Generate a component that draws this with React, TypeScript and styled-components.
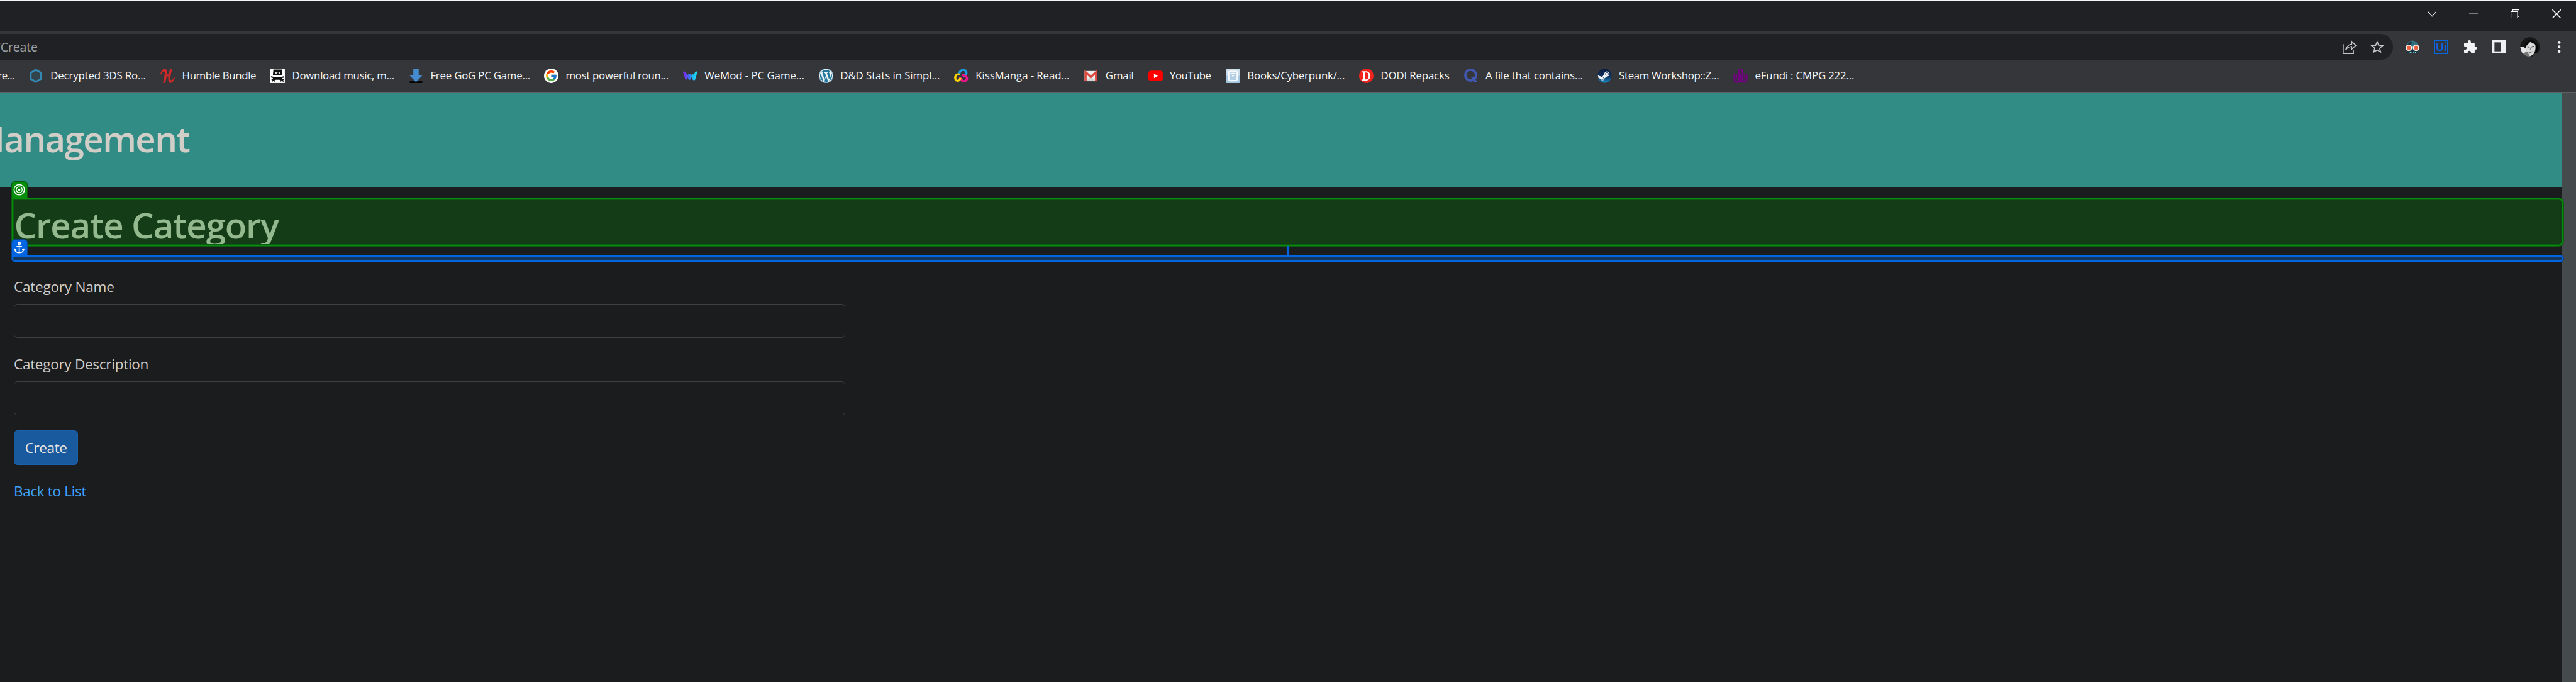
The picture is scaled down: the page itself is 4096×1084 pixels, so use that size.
import React, { useLayoutEffect, useRef, useState } from 'react';
import styled, { createGlobalStyle } from 'styled-components';
import { FcGoogle } from 'react-icons/fc';
import { FaWordpress, FaSteam } from 'react-icons/fa';
import { SiHumblebundle } from 'react-icons/si';
import { MdExtension, MdStarBorder } from 'react-icons/md';

const SCALE = 4096 / 4285;
const u = (n: number) => `${+(n * SCALE).toFixed(3)}px`;

const Global = createGlobalStyle`
  * { box-sizing: border-box; }
  html, body, #root { margin: 0; padding: 0; height: 100%; }
  body { background: #1b1c1e; overflow: hidden; font-family: "Open Sans", "Noto Sans", sans-serif; }
  svg { display: block; }
`;

/* Keeps a label at a fixed measure by spreading the difference over its letters. */
const FitLabel = styled.span<{ $spacing: number }>`
  display: inline-block;
  flex: none;
  white-space: pre;
  letter-spacing: ${(p) => p.$spacing}px;
`;

function Fit({ text, width }: { text: string; width: number }) {
  const ref = useRef<HTMLSpanElement>(null);
  const [spacing, setSpacing] = useState(0);
  useLayoutEffect(() => {
    if (!ref.current) return;
    const natural = ref.current.getBoundingClientRect().width;
    setSpacing((width * SCALE - natural) / text.length);
  }, [text, width]);
  return (
    <FitLabel ref={ref} $spacing={spacing}>
      {text}
    </FitLabel>
  );
}

const Window = styled.div`
  width: 4096px;
  height: 1084px;
  display: flex;
  flex-direction: column;
  overflow: hidden;
  background: #1b1c1e;
`;

const TabStrip = styled.header`
  flex: none;
  height: ${u(51)};
  display: flex;
  justify-content: flex-end;
  align-items: center;
  gap: ${u(54)};
  padding: 0 ${u(25)} ${u(6)} 0;
  border-top: 1px solid #f4f6f5;
  background: #202124;
  box-shadow: inset 0 1px 0 #7d8583;
`;

const Toolbar = styled.div`
  flex: none;
  height: ${u(48)};
  padding-top: ${u(6)};
  display: flex;
  background: #35363a;
`;

const Omnibox = styled.div`
  width: ${u(3981)};
  height: ${u(42)};
  display: flex;
  align-items: center;
  justify-content: space-between;
  border-radius: 0 ${u(21)} ${u(21)} 0;
  background: #202124;
  overflow: hidden;
`;

const Address = styled.div`
  width: ${u(62.5)};
  padding-top: ${u(1.5)};
  display: flex;
  justify-content: flex-end;
  font-size: ${u(20.5)};
  line-height: ${u(30)};
  color: #9aa0a6;
`;

const OmniActions = styled.div`
  display: flex;
  align-items: center;
  gap: ${u(21)};
  padding-right: ${u(13)};
  color: #c3c5c8;
`;

const Extensions = styled.div`
  flex: 1;
  display: flex;
  align-items: center;
  gap: ${u(24)};
  padding-left: ${u(21)};
  color: #f1f3f4;
`;

const UiBadge = styled.div`
  width: ${u(24)};
  height: ${u(24)};
  border: ${u(2.2)} solid #0466e0;
  display: flex;
  align-items: center;
  justify-content: center;
  font: 600 ${u(18)}/1 "Inter", sans-serif;
  color: #0466e0;
`;

const Bookmarks = styled.nav`
  flex: none;
  height: ${u(56)};
  display: flex;
  align-items: center;
  padding-bottom: ${u(0.6)};
  background: #35363a;
  border-bottom: 2px solid #5f6063;
  font-size: ${u(17.6)};
  line-height: ${u(24)};
  color: #f8f9fa;
  overflow: hidden;
`;

const Bookmark = styled.div<{ $width: number }>`
  flex: none;
  width: ${(p) => u(p.$width)};
  display: flex;
  align-items: center;
  gap: ${u(12)};
  ${FitLabel} { padding-top: ${u(1.2)}; }
`;

const Favicon = styled.span`
  flex: none;
  width: ${u(24)};
  height: ${u(24)};
  > svg { width: 100%; height: 100%; }
`;

const CutBookmark = styled.div`
  flex: none;
  width: ${u(48)};
  padding: ${u(1.2)} ${u(24.5)} 0 0;
  display: flex;
  justify-content: flex-end;
`;

const Viewport = styled.main`
  flex: 1;
  min-height: 0;
  display: flex;
  position: relative;
`;

const Page = styled.div`
  width: ${u(4262)};
  color: #d1cdc7;
`;

const Scrollbar = styled.div`
  flex: 1;
  background: #454a4d;
`;

const Banner = styled.div`
  height: ${u(156)};
  display: flex;
  align-items: center;
  background: #308c85;
  overflow: hidden;
`;

const BannerTitle = styled.div`
  width: ${u(315)};
  display: flex;
  justify-content: flex-end;
  font-size: ${u(59)};
  font-weight: 600;
  line-height: ${u(72)};
  padding-bottom: ${u(3)};
`;

const Content = styled.section`
  padding: ${u(28.5)} 0 0 ${u(23)};
  font-size: ${u(23.6)};
  line-height: ${u(36)};
`;

const Title = styled.h1`
  margin: 0;
  height: ${u(131.5)};
  padding-left: ${u(0.6)};
  font-size: ${u(59)};
  font-weight: 600;
  line-height: ${u(72)};
`;

const Field = styled.label`
  display: block;
  height: ${u(129)};
  margin-top: -${u(12)};
  & + & { margin-top: 0; }
`;

const Input = styled.input`
  display: block;
  width: ${u(1383)};
  height: ${u(57)};
  margin: ${u(10)} 0 0;
  border: 1px solid #3e4143;
  border-radius: ${u(6)};
  background: transparent;
  outline: 0;
`;

const CreateButton = styled.button`
  display: flex;
  align-items: center;
  justify-content: center;
  width: ${u(107)};
  height: ${u(57)};
  margin: -${u(1)} 0 ${u(26)};
  padding: ${u(1)} 0 0;
  border: 1px solid #1a62ab;
  border-radius: ${u(6)};
  background: #19599d;
  color: #e8e6e3;
  font: inherit;
`;

const BackLink = styled.a`
  display: block;
  color: #3fa2f7;
  text-decoration: none;
`;

/* Inspector overlays */
const GREEN = '#058d0c';
const GREEN_EDGE = '#0d5b12';
const BLUE = '#0266e2';
const BLUE_EDGE = '#0b4590';

const Highlight = styled.div<{ $top: number; $height: number; $line: string; $edge: string; $fill: string; $radius: string }>`
  position: absolute;
  left: ${u(18.6)};
  top: ${(p) => u(p.$top)};
  width: ${u(4247)};
  height: ${(p) => u(p.$height)};
  border: 1px solid ${(p) => p.$edge};
  border-radius: ${(p) => p.$radius};
  background: ${(p) => p.$fill};
  box-shadow: inset 0 0 0 2px ${(p) => p.$line}, inset 0 0 0 3px ${(p) => p.$edge};
`;

const Tag = styled.div<{ $top: number; $color: string; $edge: string }>`
  position: absolute;
  left: ${u(18.6)};
  top: ${(p) => u(p.$top)};
  width: ${u(27.2)};
  height: ${u(27.5)};
  display: flex;
  align-items: center;
  justify-content: center;
  border: 1px solid ${(p) => p.$edge};
  border-bottom: 0;
  border-radius: ${u(6)} ${u(6)} 0 0;
  background: ${(p) => p.$color};
`;

const Connector = styled.div`
  position: absolute;
  left: ${u(2140)};
  top: ${u(254.5)};
  width: 4px;
  height: ${u(15)};
  border: 1px solid ${BLUE_EDGE};
  border-width: 0 1px;
  background: ${BLUE};
`;

const px = (n: number) => n * SCALE;

const Icon = ({ size = 24, children }: { size?: number; children: React.ReactNode }) => (
  <svg width={px(size)} height={px(size)} viewBox="0 0 24 24" fill="none">
    {children}
  </svg>
);

const Hexagon = () => (
  <Icon>
    <path d="M11.5 2 20 6.8v10.4L11.5 22 3 17.2V6.800z" stroke="#3389b3" strokeWidth="3" fill="#34424a" />
    <path d="M9.500 9h4l-4 6h4" stroke="#275064" strokeWidth="1" />
  </Icon>
);
const Humble = () => (
  <Icon>
    <SiHumblebundle size={24} color="#cc2929" />
  </Icon>
);
const Truck = () => (
  <Icon>
    <path d="M0 0h24v24H0z" fill="#fff" />
    <path d="M5 1.500h14l1 10H4z" fill="#111" />
    <path d="M7.500 5.500h3v3h-3zM13.500 5.500h3v3h-3zM11 5.500h2v1h-2z" fill="#ddd" />
    <path d="M1 13.500c3 2 19 2 22 0M6 17h12M2 21l7-3.500h6l7 3.500M5 14v4M19 14v4M2 18l6 3M22 18l-6 3" stroke="#111" strokeWidth="2" />
  </Icon>
);
const Download = () => (
  <Icon>
    <path d="M1.500 21h21v3h-21z" fill="#050505" />
    <path d="M7.500 0h9v11.500h6L12 22.500 1.500 11.500h6z" fill="#458bd0" />
  </Icon>
);
const Google = () => (
  <Icon>
    <circle cx="12" cy="12" r="12" fill="#fff" />
    <g transform="translate(1.500 1.500)"><FcGoogle size={21} /></g>
  </Icon>
);
const WeMod = () => (
  <Icon>
    <defs>
      <linearGradient id="wemod" x1="0" x2="1">
        <stop offset="0" stopColor="#8a1ff5" />
        <stop offset=".42" stopColor="#3d6cf0" />
        <stop offset=".7" stopColor="#20bcf5" />
        <stop offset="1" stopColor="#12e8f6" />
      </linearGradient>
    </defs>
    <path d="M0 5.500c2-1.500 4-.5 5 1.500l2.500 4c.5-3 3.500-3.500 5-1l1 2c0-3 3-4 4.500-1.500L20 6c1-1.500 3-1.500 4-.5l-3.500 12c-.8 2.500-3.500 2.500-4.700.3l-2-3.500-1 3c-.7 2-3 2-4 0L7.500 15l-.7 2.500c-1 1.500-3 1-3.600-1z" fill="url(#wemod)" />
  </Icon>
);
const WordPress = () => (
  <Icon>
    <circle cx="12" cy="12" r="12" fill="#e9f2f6" />
    <FaWordpress size={24} color="#21759b" />
  </Icon>
);
const Kiss = () => (
  <Icon>
    <g strokeWidth="3.600">
      <path d="M3.500 20.500C-.5 13 4 8 9.500 9.800" stroke="#ffd400" />
      <path d="M9 8C10 1 19 0 20.500 6.500c.5 3-2 5-5 5.500" stroke="#1d9be0" />
      <path d="M13 11c8 0 11 6 6.500 9-4 2.500-8 0-9.500-6" stroke="#f0148c" />
      <path d="M4 20.500c3 .5 6-1.500 6.500-5" stroke="#ffd400" />
    </g>
  </Icon>
);
const Gmail = () => (
  <Icon>
    <path d="M1.500 4h21v17h-21z" fill="#ececec" />
    <path d="M4 21 12 13l8 8z" fill="#d3d3d3" />
    <path d="M3.300 21V6l8.700 8 8.700-8v15" stroke="#dc4a3d" strokeWidth="3.600" />
  </Icon>
);
const YouTube = () => (
  <Icon>
    <rect y="3.500" width="24" height="17.500" rx="4.500" fill="#f00" />
    <path d="m9.300 8.500 6.500 3.700-6.500 3.700z" fill="#fff" />
  </Icon>
);
const Books = () => (
  <Icon>
    <rect width="24" height="24" rx="2" fill="#a5c7e1" />
    <path d="M0 2q0-2 2-2h20q2 0 2 2v10H0z" fill="#cbddeb" />
    <rect x="5" y="4.500" width="14" height="15.500" rx="2" stroke="#f3f8fc" strokeWidth="2.400" fill="#b3cde2" />
    <path d="M8 8h8" stroke="#fff" strokeWidth="1.800" />
    <path d="m9.500 11 5 0-2.500 3z" fill="#fff" />
  </Icon>
);
const Dodi = () => (
  <Icon>
    <circle cx="12" cy="12" r="12" fill="#f0241c" />
    <path d="M5 5.500h8M5 19h8M8 5.500V19M11.500 5.500c8-.5 8 13.500 0 13.500" stroke="#fff" strokeWidth="2" />
    <path d="M9 5.500V19M16.300 8c1.300 2 1.300 6.500 0 8.500" stroke="#fff" strokeWidth="2.600" />
  </Icon>
);
const Quiz = () => (
  <Icon>
    <circle cx="12" cy="11" r="9" stroke="#4257b2" strokeWidth="4" />
    <path d="M12 13.500h4.500l7.500 9.500h-6z" fill="#4257b2" />
  </Icon>
);
const Steam = () => (
  <Icon>
    <defs>
      <linearGradient id="steam" x1="0" x2="0" y1="0" y2="1">
        <stop offset="0" stopColor="#0b1b3d" />
        <stop offset=".55" stopColor="#0c2f5d" />
        <stop offset="1" stopColor="#1a8fc6" />
      </linearGradient>
    </defs>
    <circle cx="12" cy="12" r="11" fill="#f4f6f8" />
    <FaSteam size={24} fill="url(#steam)" />
  </Icon>
);
const EFundi = () => (
  <Icon>
    <g stroke="#730080" strokeWidth="3">
      <path d="M2 9v8c0 7 7 7 7 1V7c0-7 6.500-7 6.500 0v11c0 6 6.500 6 6.500-1V9" />
      <path d="M5.500 8v9M19 8v9M12 8v9c0 2-1 5-3 6M12 17c0 2 1 5 3 6" strokeWidth="2" />
    </g>
  </Icon>
);

interface BookmarkData { label: string; icon: React.ReactNode; width: number; text: number }
const bookmarks: BookmarkData[] = [
  { label: 'Decrypted 3DS Ro...', icon: <Hexagon />, width: 219, text: 158.5 },
  { label: 'Humble Bundle', icon: <Humble />, width: 183, text: 123 },
  { label: 'Download music, m...', icon: <Truck />, width: 230, text: 170 },
  { label: 'Free GoG PC Game...', icon: <Download />, width: 225, text: 166 },
  { label: 'most powerful roun...', icon: <Google />, width: 231, text: 171 },
  { label: 'WeMod - PC Game...', icon: <WeMod />, width: 226, text: 166 },
  { label: 'D&D Stats in Simpl...', icon: <WordPress />, width: 225, text: 165.5 },
  { label: 'KissManga - Read...', icon: <Kiss />, width: 216, text: 156 },
  { label: 'Gmail', icon: <Gmail />, width: 107, text: 47 },
  { label: 'YouTube', icon: <YouTube />, width: 129, text: 68.5 },
  { label: 'Books/Cyberpunk/...', icon: <Books />, width: 222, text: 162 },
  { label: 'DODI Repacks', icon: <Dodi />, width: 174, text: 114 },
  { label: 'A file that contains...', icon: <Quiz />, width: 222, text: 162 },
  { label: 'Steam Workshop::Z...', icon: <Steam />, width: 226.5, text: 166.5 },
  { label: 'eFundi : CMPG 222...', icon: <EFundi />, width: 226, text: 165 },
];

const Glyph = ({ w, h, children, line = '#fff' }: { w: number; h: number; children: React.ReactNode; line?: string }) => (
  <svg width={px(w)} height={px(h)} viewBox={`0 0 ${w} ${h}`} fill="none" stroke={line} strokeWidth="1.200">
    {children}
  </svg>
);

const Share = () => (
  <Glyph w={23} h={23} line="#c3c5c8">
    <path d="M.9 6.500v15.600h17v-5M5 16.500C6.500 10 10 7 15 6.500V2l7 6.500-7 6.500v-4.500c-4.500 0-7.500 2-10 6z" strokeWidth="1.700" />
  </Glyph>
);

const Robot = () => (
  <Glyph w={23} h={23} line="none">
    <path d="M2 22V11C2 4 6.500.5 11.500.5S21 4 21 11v11z" fill="#33707f" />
    <path d="M2 13C3 6 6 2 11 3l-2 5h-4z" fill="#17333f" />
    <path d="M2 15h19v7H2z" fill="#173743" />
    <path d="M7 19h1.500v3H7zM10 19h1.500v3H10zM12.800 19h1.500v3h-1.500zM15.500 19H17v3h-1.500z" fill="#9ad1dd" />
    <circle cx="5.500" cy="12.500" r="4.500" fill="#ea6240" stroke="#fff" strokeWidth="1.800" />
    <circle cx="17.500" cy="12.500" r="4.500" fill="#ea6240" stroke="#fff" strokeWidth="1.800" />
    <path d="M9 11.500q2.500-1.500 5 0" stroke="#fff" strokeWidth="1.500" />
  </Glyph>
);

const SidePanel = () => (
  <Glyph w={22} h={22} line="none">
    <path d="M0 0h22v22H0z" fill="#eef0f2" />
    <path d="M3.500 3.500h10.500v15H3.500z" fill="#35363a" />
  </Glyph>
);

const Avatar = () => (
  <Glyph w={33} h={33} line="none">
    <defs><clipPath id="face"><circle cx="16.500" cy="16.500" r="16.300" /></clipPath></defs>
    <g clipPath="url(#face)">
      <path d="M0 0h33v33H0z" fill="#161616" />
      <path d="M10 12c2-5 12-6 15 0 2 6 0 13-3 17l-5 3-5-3c-3-5-4-12-2-17z" fill="#d9d9d9" />
      <path d="M11 14 17 8l8 4V7L16 4 8 11v8z" fill="#0b0b0b" />
      <path d="M0 17l6-1 4 4-1 9-5-1z" fill="#e6e6e6" />
      <path d="M5 27l7-3 5 9H7z" fill="#777" />
      <path d="M12 16l4 .8M19 16.500l4-1" stroke="#222" strokeWidth="1.500" />
      <path d="M14 24.500q4 2 7-.5" stroke="#555" strokeWidth="1.200" />
      <path d="M17.500 17.500 17 21.500h2.500" stroke="#777" strokeWidth="1" />
      <path d="M25 10c5 2 6 8 3 14l-3 3c2-6 2-12 0-17z" fill="#050505" />
      <path d="M22 29l7-3v7h-9z" fill="#3b3b3b" />
    </g>
  </Glyph>
);

export default function App() {
  return (
    <Window>
      <Global />
      <TabStrip>
        <Glyph w={15} h={15}><path d="M.5 3.500l7 8 7-8" /></Glyph>
        <Glyph w={15} h={15}><path d="M0 7.500h15" /></Glyph>
        <Glyph w={15} h={15}><path d="M.6 3.500h11v11h-11zM3.500 3.500V.6h11v11h-3" /></Glyph>
        <Glyph w={15} h={15}><path d="M.3.3l14.400 14.400M14.700.3.3 14.700" strokeWidth="1.500" /></Glyph>
      </TabStrip>
      <Toolbar>
        <Omnibox>
          <Address><Fit text="/Create" width={69} /></Address>
          <OmniActions>
            <Share />
            <MdStarBorder size={px(27)} />
          </OmniActions>
        </Omnibox>
        <Extensions>
          <Robot />
          <UiBadge>Ui</UiBadge>
          <MdExtension size={px(25)} />
          <SidePanel />
          <Avatar />
          <Glyph w={15} h={20} line="none">
            <g fill="#eef0f2"><circle cx="7.500" cy="2.500" r="2.400" /><circle cx="7.500" cy="10" r="2.400" /><circle cx="7.500" cy="17.500" r="2.400" /></g>
          </Glyph>
        </Extensions>
      </Toolbar>
      <Bookmarks>
        <CutBookmark><Fit text="re..." width={27} /></CutBookmark>
        {bookmarks.map((b) => (
          <Bookmark key={b.label} $width={b.width}>
            <Favicon>{b.icon}</Favicon>
            <Fit text={b.label} width={b.text} />
          </Bookmark>
        ))}
      </Bookmarks>
      <Viewport>
        <Page>
          <Banner>
            <BannerTitle><Fit text="Management" width={361} /></BannerTitle>
          </Banner>
          <Content>
            <Title><Fit text="Create Category" width={440} /></Title>
            <Field>
              <Fit text="Category Name" width={167} />
              <Input />
            </Field>
            <Field>
              <Fit text="Category Description" width={224} />
              <Input />
            </Field>
            <CreateButton><Fit text="Create" width={70} /></CreateButton>
            <BackLink><Fit text="Back to List" width={120.5} /></BackLink>
          </Content>
        </Page>
        <Scrollbar />
        <Highlight $top={173} $height={82} $line={GREEN} $edge={GREEN_EDGE} $fill="rgba(5,138,10,.3)" $radius={`0 ${u(9)} ${u(9)} 0`} />
        <Highlight $top={269} $height={12} $line={BLUE} $edge={BLUE_EDGE} $fill="#17375a" $radius={`0 ${u(6)} ${u(6)} ${u(6)}`} />
        <Connector />
        <Tag $top={146.3} $color={GREEN} $edge={GREEN_EDGE}>
          <Glyph w={20} h={20}>
            <circle cx="10" cy="10" r="8.600" strokeWidth="1.700" />
            <circle cx="10" cy="10" r="4.900" strokeWidth="1.500" />
            <circle cx="10" cy="10" r="1.300" fill="#fff" />
          </Glyph>
        </Tag>
        <Tag $top={242.3} $color={BLUE} $edge={BLUE_EDGE}>
          <Glyph w={18} h={20}>
            <g strokeWidth="1.600">
              <circle cx="9" cy="3" r="1.900" />
              <path d="M9 5v13.500M4.500 8.200h9" />
              <path d="M1.500 12.500C2 16.500 5 18.600 9 18.600s7-2.100 7.500-6.100M.8 14.800l.8-2.600 2.500 1.300M17.200 14.800l-.8-2.600-2.500 1.300" />
            </g>
          </Glyph>
        </Tag>
      </Viewport>
    </Window>
  );
}
